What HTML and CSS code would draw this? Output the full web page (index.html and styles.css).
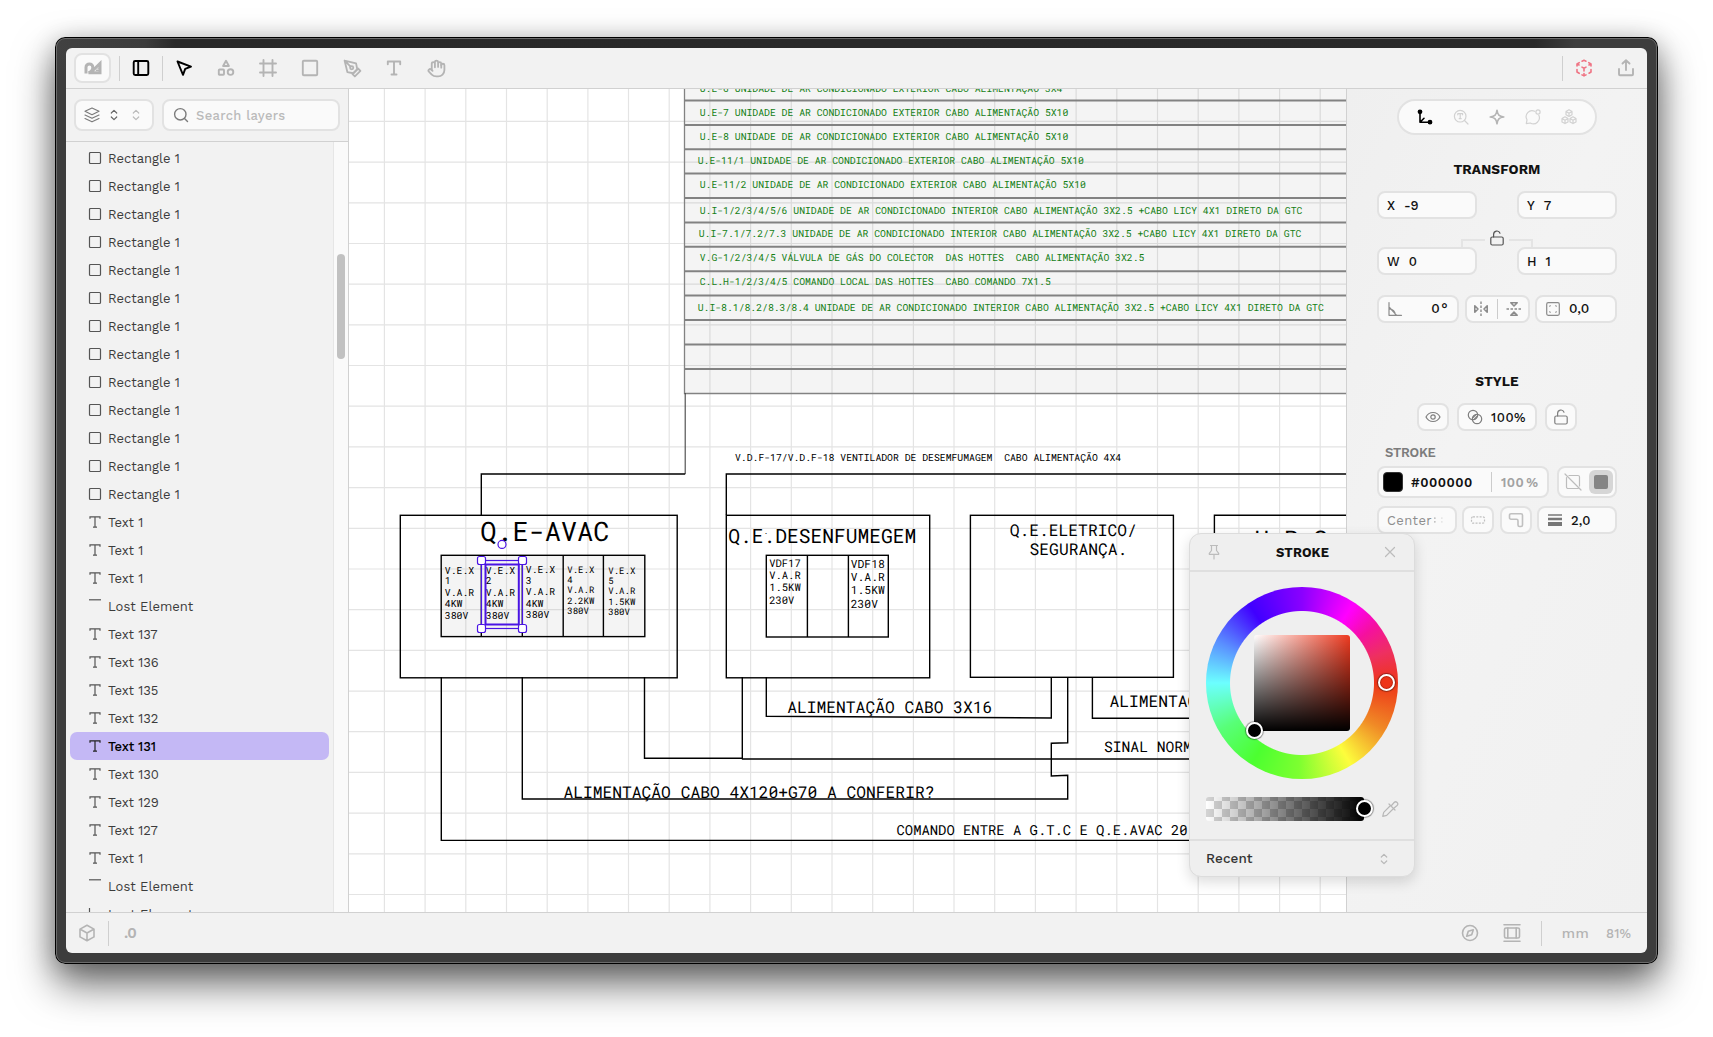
FILE: index.html
```html
<!DOCTYPE html>
<html lang="en">
<head>
<meta charset="utf-8">
<title>Vector editor</title>
<link rel="stylesheet" href="styles.css">
</head>
<body>
<svg class="defs" aria-hidden="true">
  <symbol id="rect" viewBox="0 0 14 14"><rect x="1.5" y="1.5" width="11" height="11" rx="1" /></symbol>
  <symbol id="text" viewBox="0 0 14 14"><path d="M2 3.8V1.9h10v1.9M7 1.9v10.2M5 12.1h4" /></symbol>
  <symbol id="line" viewBox="0 0 14 14"><path d="M1 .8h12" /></symbol>
  <symbol id="vline" viewBox="0 0 14 14"><path d="M1.5 1v12" /></symbol>
  <symbol id="updown" viewBox="0 0 8 12"><path d="M1.3 4 4 1.3 6.7 4M1.3 8 4 10.7 6.7 8" /></symbol>
  <symbol id="unlock" viewBox="0 0 16 18"><rect x="1.8" y="8" width="12.4" height="8" rx="1.5" /><path d="M4.6 8V5.4a3.3 3.3 0 0 1 6.4-1.2" /></symbol>
</svg>
<div class="window">
  <div class="app">
    <header class="toolbar">
      <div class="logo"><svg width="20" height="16" viewBox="0 0 20 16"><path d="M3 13.5V7.300a3.400 3.400 0 0 1 6.800 0c0 2.700-1.500 4.700-4.300 5.400H17V3.500L9.300 11" /><path d="M13 10.500l3-3v3z" class="solid" /></svg></div>
      <i class="sep"></i>
      <span class="tool on"><svg viewBox="0 0 20 20"><rect x="2.7" y="3" width="14.6" height="14" rx="1.5" /><path d="M7.2 3v14" /></svg></span>
      <i class="sep"></i>
      <span class="tool on"><svg viewBox="0 0 20 20"><path d="M3.5 3.5 17 8.6l-5.8 2.2L9 16.8z" /></svg></span>
      <span class="tool"><svg viewBox="0 0 20 20"><path d="M10 2.800 12.900 8H7.100z" /><rect x="2.800" y="11.500" width="5.200" height="5.200" rx=".8" /><circle cx="14.500" cy="14.100" r="2.800" /></svg></span>
      <span class="tool"><svg viewBox="0 0 20 20"><path d="M5.500 2v16M14.500 2v16M2 5.500h16M2 14.500h16" /></svg></span>
      <span class="tool"><svg viewBox="0 0 20 20"><rect x="2.800" y="2.800" width="14.400" height="14.400" rx="1" /></svg></span>
      <span class="tool"><svg viewBox="0 0 24 24" class="pen"><path d="m12 19 7-7 3 3-7 7-3-3z" /><path d="m18 13-1.500-7.500L2 2l3.500 14.500L13 18l5-5zM2 2l7.600 7.600" /><circle cx="11" cy="11" r="2" /></svg></span>
      <span class="tool"><svg viewBox="0 0 20 20"><path d="M3.800 6.200V3.500h12.400v2.700M10 3.500v13M7.500 16.500h5" /></svg></span>
      <span class="tool"><svg viewBox="0 0 24 24" class="pen"><path d="M18 11V6a2 2 0 0 0-4 0M14 10V4a2 2 0 0 0-4 0v2M10 10.500V6a2 2 0 0 0-4 0v8" /><path d="M18 8a2 2 0 1 1 4 0v6a8 8 0 0 1-8 8h-2c-2.800 0-4.500-.86-5.990-2.340l-3.600-3.600a2 2 0 0 1 2.830-2.820L7 15" /></svg></span>
      <span class="grow"></span>
      <i class="sep"></i>
      <span class="tool pink"><svg viewBox="0 0 20 20"><path d="M8 3.200 10 2.200l2 1M14.800 4.700l2.200 1.200v2M17 11.500V14l-2 1.200M12 16.900l-2 1-2-1M5.200 15.300 3 14v-2.500M3 8V5.900l2.200-1.200M10 11v2M10 10.200 8 9.100M10 10.200l2-1.100M3.300 6l1.700 1M16.700 6 15 7M10 15.500V18" /></svg></span>
      <span class="tool"><svg viewBox="0 0 20 20"><path d="M3 11v5.300a1 1 0 0 0 1 1h12a1 1 0 0 0 1-1V11M10 12V2.500M6.500 5.500 10 2.200l3.500 3.300" /></svg></span>
    </header>

    <main class="body">
      <aside class="layers">
        <div class="filters">
          <div class="field kind"><svg width="18" height="18" viewBox="0 0 18 18"><path d="m9 2 7 3.300-7 3.400-7-3.400zM2 9l7 3.300L16 9M2 12.500l7 3.300 7-3.300" /></svg><svg class="chev" width="8" height="12"><use href="#updown" /></svg><svg class="chev dim" width="8" height="12"><use href="#updown" /></svg></div>
          <div class="field search"><svg width="16" height="16" viewBox="0 0 16 16"><circle cx="7.300" cy="7.300" r="5.700" /><path d="m11.500 11.500 3 3" /></svg><span>Search layers</span></div>
        </div>
        <div class="list">
          <ul>
            <li><svg><use href="#rect" /></svg>Rectangle 1</li>
            <li><svg><use href="#rect" /></svg>Rectangle 1</li>
            <li><svg><use href="#rect" /></svg>Rectangle 1</li>
            <li><svg><use href="#rect" /></svg>Rectangle 1</li>
            <li><svg><use href="#rect" /></svg>Rectangle 1</li>
            <li><svg><use href="#rect" /></svg>Rectangle 1</li>
            <li><svg><use href="#rect" /></svg>Rectangle 1</li>
            <li><svg><use href="#rect" /></svg>Rectangle 1</li>
            <li><svg><use href="#rect" /></svg>Rectangle 1</li>
            <li><svg><use href="#rect" /></svg>Rectangle 1</li>
            <li><svg><use href="#rect" /></svg>Rectangle 1</li>
            <li><svg><use href="#rect" /></svg>Rectangle 1</li>
            <li><svg><use href="#rect" /></svg>Rectangle 1</li>
            <li><svg><use href="#text" /></svg>Text 1</li>
            <li><svg><use href="#text" /></svg>Text 1</li>
            <li><svg><use href="#text" /></svg>Text 1</li>
            <li><svg><use href="#line" /></svg>Lost Element</li>
            <li><svg><use href="#text" /></svg>Text 137</li>
            <li><svg><use href="#text" /></svg>Text 136</li>
            <li><svg><use href="#text" /></svg>Text 135</li>
            <li><svg><use href="#text" /></svg>Text 132</li>
            <li class="sel"><svg><use href="#text" /></svg>Text 131</li>
            <li><svg><use href="#text" /></svg>Text 130</li>
            <li><svg><use href="#text" /></svg>Text 129</li>
            <li><svg><use href="#text" /></svg>Text 127</li>
            <li><svg><use href="#text" /></svg>Text 1</li>
            <li><svg><use href="#line" /></svg>Lost Element</li>
            <li><svg><use href="#vline" /></svg>Lost Element</li>
          </ul>
          <div class="track"><div class="thumb"></div></div>
        </div>
      </aside>

      <section class="canvas">
        <svg width="997" height="823" viewBox="349 89 997 823">
          <path class="gridline" d="M384.400 89v823M425.100 89v823M465.800 89v823M506.500 89v823M547.200 89v823M587.900 89v823M628.500 89v823M669.200 89v823M709.900 89v823M750.600 89v823M791.300 89v823M832 89v823M872.700 89v823M913.400 89v823M954 89v823M994.700 89v823M1035.400 89v823M1076.100 89v823M1116.800 89v823M1157.500 89v823M1198.200 89v823M1238.900 89v823M1279.600 89v823M1320.200 89v823" />
          <path class="gridline" d="M349 121.400h997M349 162.100h997M349 202.800h997M349 243.500h997M349 284.200h997M349 324.900h997M349 365.500h997M349 406.200h997M349 446.900h997M349 487.600h997M349 528.300h997M349 569h997M349 609.700h997M349 650.400h997M349 691.100h997M349 731.700h997M349 772.400h997M349 813.100h997M349 853.800h997M349 894.500h997" />

          <g class="table">
            <rect x="684" y="80" width="680" height="313.200" />
            <path d="M684 100.500H1346M684 124.900H1346M684 149.300H1346M684 173.600H1346M684 198H1346M684 222.400H1346M684 246.800H1346M684 271.200H1346M684 295.500H1346M684 320H1346M684 344.400H1346M684 368.900H1346" />
            <path d="M684.500 89V393.500H1346" class="edge" />
          </g>
          <g class="t s green">
            <text x="699.700" y="92">U.E-6 UNIDADE DE AR CONDICIONADO EXTERIOR CABO ALIMENTAÇÃO 3X4</text>
            <text x="699.700" y="116">U.E-7 UNIDADE DE AR CONDICIONADO EXTERIOR CABO ALIMENTAÇÃO 5X10</text>
            <text x="699.700" y="140">U.E-8 UNIDADE DE AR CONDICIONADO EXTERIOR CABO ALIMENTAÇÃO 5X10</text>
            <text x="697.700" y="164">U.E-11/1 UNIDADE DE AR CONDICIONADO EXTERIOR CABO ALIMENTAÇÃO 5X10</text>
            <text x="699.700" y="188">U.E-11/2 UNIDADE DE AR CONDICIONADO EXTERIOR CABO ALIMENTAÇÃO 5X10</text>
            <text x="699.700" y="214">U.I-1/2/3/4/5/6 UNIDADE DE AR CONDICIONADO INTERIOR CABO ALIMENTAÇÃO 3X2.5 +CABO LICY 4X1 DIRETO DA GTC</text>
            <text x="698.700" y="237">U.I-7.1/7.2/7.3 UNIDADE DE AR CONDICIONADO INTERIOR CABO ALIMENTAÇÃO 3X2.5 +CABO LICY 4X1 DIRETO DA GTC</text>
            <text x="699.700" y="261">V.G-1/2/3/4/5 VÁLVULA DE GÁS DO COLECTOR&#160; DAS HOTTES&#160; CABO ALIMENTAÇÃO 3X2.5</text>
            <text x="699.700" y="285">C.L.H-1/2/3/4/5 COMANDO LOCAL DAS HOTTES&#160; CABO COMANDO 7X1.5</text>
            <text x="697.700" y="311">U.I-8.1/8.2/8.3/8.4 UNIDADE DE AR CONDICIONADO INTERIOR CABO ALIMENTAÇÃO 3X2.5 +CABO LICY 4X1 DIRETO DA GTC</text>
          </g>

          <rect x="441" y="555.300" width="204" height="81.300" class="shade" />
          <g class="wire">
            <path d="M685.200 393V474" class="thin" />
            <path d="M685.200 474H481.300V515.300" />
            <rect x="400.300" y="515.300" width="276.900" height="162.500" />
            <rect x="441.200" y="555.300" width="203.600" height="81.300" />
            <path d="M481.300 555V637M522.300 555V637M563.200 555V637M603.400 555V637" />
            <path d="M1346 474H726.300V515" />
            <rect x="726.300" y="515.300" width="203.400" height="162.500" />
            <rect x="766.300" y="555.300" width="122" height="81.700" />
            <path d="M807.400 555V637M848.400 555V637" />
            <rect x="970.400" y="515.300" width="203" height="162" />
            <path d="M1346 515.300H1214.400V677" />
            <path d="M441.300 677V840.400H1346M522.300 677V799H1067.700V775.200L1051.300 776V743.300L1067.700 742.800V677M644.500 677V758.300H742L742.500 759H1346M742.300 677V759M766.300 677V716.300L1051.300 718V677M1092.400 677V718.300H1346" />
          </g>
          <g class="t">
            <text x="735" y="461" class="s">V.D.F-17/V.D.F-18 VENTILADOR DE DESEMFUMAGEM&#160; CABO ALIMENTAÇÃO 4X4</text>
            <text x="480.300" y="540.700" font-size="26.900">Q.E-AVAC</text>
            <text x="728.300" y="543" font-size="19.570">Q.E.DESENFUMEGEM</text>
            <text x="763.500" y="534" font-size="8">.</text>
            <g font-size="16.270">
              <text x="1009.800" y="536">Q.E.ELETRICO/</text>
              <text x="1029.600" y="555">SEGURANÇA.</text>
              <text x="787.300" y="712.700">ALIMENTAÇÃO CABO 3X16</text>
              <text x="1109.500" y="707">ALIMENTAÇÃO</text>
              <text x="563.500" y="797.700">ALIMENTAÇÃO CABO 4X120+G70 A CONFERIR?</text>
            </g>
            <text x="1254.500" y="548" font-size="24.400">U.P.S</text>
            <text x="1104" y="752" font-size="14.650">SINAL NORMAL</text>
            <text x="896.500" y="835" font-size="13.860">COMANDO ENTRE A G.T.C E Q.E.AVAC 20</text>
            <g font-size="9.800">
              <text y="573.700"><tspan x="444.800">V.E.X</tspan><tspan x="444.800" y="584.300">1</tspan><tspan x="444.800" y="595.700">V.A.R</tspan><tspan x="444.800" y="607.300">4KW</tspan><tspan x="444.800" y="618.700">380V</tspan></text>
              <text y="573.700"><tspan x="485.800">V.E.X</tspan><tspan x="485.800" y="584.300">2</tspan><tspan x="485.800" y="595.700">V.A.R</tspan><tspan x="485.800" y="607.300">4KW</tspan><tspan x="485.800" y="618.700">380V</tspan></text>
              <text y="572.700"><tspan x="525.800">V.E.X</tspan><tspan x="525.800" y="583.700">3</tspan><tspan x="525.800" y="594.700">V.A.R</tspan><tspan x="525.800" y="606.700">4KW</tspan><tspan x="525.800" y="618">380V</tspan></text>
            </g>
            <g font-size="9">
              <text y="572.700"><tspan x="567.300">V.E.X</tspan><tspan x="567.300" y="583">4</tspan><tspan x="567.300" y="593">V.A.R</tspan><tspan x="567.300" y="604">2.2KW</tspan><tspan x="567.300" y="614">380V</tspan></text>
              <text y="573.700"><tspan x="608.300">V.E.X</tspan><tspan x="608.300" y="584">5</tspan><tspan x="608.300" y="594">V.A.R</tspan><tspan x="608.300" y="605">1.5KW</tspan><tspan x="608.300" y="615">380V</tspan></text>
            </g>
            <text font-size="10.500" y="567"><tspan x="769.200">VDF17</tspan><tspan x="769.200" y="579">V.A.R</tspan><tspan x="769.200" y="591">1.5KW</tspan><tspan x="769.200" y="604">230V</tspan></text>
            <text font-size="11.300" y="568"><tspan x="850.800">VDF18</tspan><tspan x="850.800" y="581">V.A.R</tspan><tspan x="850.800" y="594">1.5KW</tspan><tspan x="850.800" y="608">230V</tspan></text>
          </g>
          <g class="pick">
            <rect x="481.500" y="560.500" width="41" height="68" />
            <rect x="485.500" y="564.500" width="33.300" height="60" class="bold" />
            <g class="knob">
              <rect x="477.500" y="556.500" width="8" height="8" rx="2" /><rect x="518.500" y="556.500" width="8" height="8" rx="2" />
              <rect x="477.500" y="624.500" width="8" height="8" rx="2" /><rect x="518.500" y="624.500" width="8" height="8" rx="2" />
              <circle cx="502" cy="544.400" r="4" />
            </g>
          </g>
        </svg>
      </section>

      <aside class="panel">
        <nav class="tabs">
          <svg class="cur" viewBox="0 0 18 18"><path d="M4 4v10.300h10M4.300 14 8 10.300" /><circle cx="4" cy="3.800" r="1.600" class="dot" /><circle cx="14" cy="14.200" r="1.600" class="dot" /></svg>
          <svg class="faint" viewBox="0 0 18 18"><circle cx="8.200" cy="8.200" r="5.800" /><path d="m12.500 12.500 3.500 3.500M5.800 6.800V5.700h4.800v1.100M8.200 5.700v5M7.200 10.700h2" /></svg>
          <svg class="mid" viewBox="0 0 18 18"><path d="M9 2.200C9.600 6.900 11.100 8.400 15.800 9 11.100 9.600 9.600 11.100 9 15.800 8.400 11.100 6.900 9.600 2.200 9 6.900 8.400 8.400 6.900 9 2.200z" /></svg>
          <svg class="faint" viewBox="0 0 18 18"><path d="M10.700 3.300A6 6 0 0 0 3 11.800L2.300 15.700l4-.7a6 6 0 0 0 8.500-7.700" /><circle cx="14" cy="4" r="2.100" /></svg>
          <svg class="faint" viewBox="0 0 18 18"><path d="m9 1.700 3 1.700v3.400L9 8.500 6 6.800V3.400zM5 8.800l3 1.700v3.400l-3 1.700-3-1.700v-3.400zM13 8.800l3 1.700v3.400l-3 1.700-3-1.700v-3.400zM6 3.500l3 1.700 3-1.700M9 5.200v3.300M2 10.600l3 1.700 3-1.700M5 12.300v3.300M10 10.600l3 1.700 3-1.700M13 12.300v3.300" /></svg>
        </nav>
        <h2>TRANSFORM</h2>
        <div class="row pair"><div class="field num">X<b>-9</b></div><div class="field num">Y<b>7</b></div></div>
        <div class="link"><i class="l"></i><svg width="16" height="18"><use href="#unlock" /></svg><i class="r"></i></div>
        <div class="row pair"><div class="field num">W<b>0</b></div><div class="field num">H<b>1</b></div></div>
        <div class="row three">
          <div class="field angle"><svg width="16" height="16" viewBox="0 0 16 16"><path d="M2 1.500v12.800h12.500M2.500 8c3.500.300 5.500 2.500 6 6M2.500 6.500l6.500 7" /></svg><b>0°</b></div>
          <div class="field flips">
            <svg width="16" height="16" viewBox="0 0 16 16"><path d="M1.800 4.800v6.400L5 8zM14.200 4.800v6.400L11 8z" class="fat" /><path d="M8 .500v15" class="dash" /></svg><i></i>
            <svg width="16" height="16" viewBox="0 0 16 16"><path d="M4.800 1.800h6.400L8 5zM4.800 14.200h6.400L8 11z" class="fat" /><path d="M.500 8h15" class="dash" /></svg>
          </div>
          <div class="field corner"><svg width="16" height="16" viewBox="0 0 16 16"><rect x="1.700" y="1.700" width="12.600" height="12.600" rx="1.500" /><path d="M4.700 5.500v-.8h.8M10.500 4.700h.8v.8M11.300 10.500v.8h-.8M5.500 11.300h-.8v-.8" stroke-width=".8" /></svg><b>0,0</b></div>
        </div>
        <h2 class="style">STYLE</h2>
        <div class="row mids">
          <div class="field icon"><svg width="16" height="16" viewBox="0 0 16 16"><path d="M1 8c1.500-3 4-4.500 7-4.500S13.500 5 15 8c-1.500 3-4 4.500-7 4.500S2.500 11 1 8z" /><circle cx="8" cy="8" r="2.200" /></svg></div>
          <div class="field op"><svg width="16" height="16" viewBox="0 0 16 16"><circle cx="6" cy="6" r="4.700" /><circle cx="10" cy="10" r="4.700" /><path d="m6 8.500 2.500-2.500M7.500 10 10 7.500" /></svg><b>100%</b></div>
          <div class="field icon"><svg width="16" height="18"><use href="#unlock" /></svg></div>
        </div>
        <h3>STROKE</h3>
        <div class="row color">
          <div class="field hex"><i class="swatch"></i><b>#000000</b><i class="bar"></i><em>100<span>%</span></em></div>
          <div class="field fills"><svg width="18" height="18" viewBox="0 0 18 18"><path d="M5 2.500h9a1.500 1.500 0 0 1 1.500 1.500v9M14 15.500H4A1.500 1.500 0 0 1 2.500 14V4.500M1 1l16 16" /></svg><span><i></i></span></div>
        </div>
        <div class="row color">
          <div class="field center">Center<svg class="colons" width="12" height="8" viewBox="0 0 12 8"><path d="M1 2.200h1.600M1 5.800h1.600" opacity=".7" /><path d="M8 2.200h1.600M8 5.800h1.600" opacity=".25" /></svg></div>
          <div class="field icon lite"><svg width="16" height="16" viewBox="0 0 16 16"><rect x="1.500" y="4.800" width="13" height="6.400" rx="1.500" class="dots" /></svg></div>
          <div class="field icon lite"><svg width="16" height="16" viewBox="0 0 16 16"><path d="M3 1.700h10a1.500 1.500 0 0 1 1.500 1.500V13a1.500 1.500 0 0 1-1.500 1.500h-1.500A1.500 1.500 0 0 1 10 13V8.700a1.500 1.500 0 0 0-1.500-1.500H3a1.500 1.500 0 0 1-1.500-1.500V3.200A1.500 1.500 0 0 1 3 1.700z" class="fat" /></svg></div>
          <div class="field weight"><svg width="16" height="14" viewBox="0 0 16 14"><path d="M1 2h14" stroke-width="1.500" /><path d="M1 6h14" stroke-width="2.500" /><path d="M1 11h14" stroke-width="4" /></svg><b>2,0</b></div>
        </div>
      </aside>
    </main>

    <footer class="status">
      <svg width="18" height="18" viewBox="0 0 18 18"><path d="m9 1.300 7 3.800v7.800l-7 3.800-7-3.800V5.100zM2.300 5.300 9 9l6.700-3.700M9 9v7.500" /></svg>
      <i class="sep"></i>
      <span class="prec">.0</span>
      <span class="grow"></span>
      <svg class="compass" width="18" height="18" viewBox="0 0 18 18"><circle cx="9" cy="9" r="7.500" /><path d="m12.300 5.700-1.600 5-5 1.600 1.600-5z" /></svg>
      <svg class="film" width="18" height="20" viewBox="0 0 18 20"><path d="M1 1.700h16M1 18.300h16" /><rect x="1.500" y="5" width="15" height="10" rx="1.500" /><path d="M4.800 5v10M13.200 5v10" /></svg>
      <i class="sep end"></i>
      <span class="unit">mm</span>
      <span class="zoom">81%</span>
    </footer>
  </div>
</div>

<div class="popup">
  <div class="phead"><svg width="14" height="16" viewBox="0 0 14 16"><path d="M3.500 1.500h7M4.500 1.500v5L2.300 9.300v1h9.400v-1L9.500 6.500v-5M7 10.500V15" /></svg><strong>STROKE</strong><svg width="12" height="12" viewBox="0 0 12 12"><path d="m1.500 1.500 9 9M10.500 1.500l-9 9" /></svg></div>
  <div class="pbody">
    <div class="wheel"><div class="square"></div><i class="grip hue"></i><i class="grip sv"></i></div>
    <div class="alpha"><div class="ramp"><i class="grip end"></i></div><svg width="18" height="18" viewBox="0 0 18 18"><path d="M9.500 5.500 2.700 12.300l-1 4 4-1 6.800-6.800M8 4l6 6M10.500 5.500l2.600-3a2 2 0 0 1 3 3l-3 2.500" /></svg></div>
  </div>
  <div class="pfoot">Recent<svg width="8" height="12"><use href="#updown" /></svg></div>
</div>
</body>
</html>
```
FILE: styles.css
```css
* { box-sizing: border-box; }
body {
  margin: 0;
  width: 1713px;
  height: 1037px;
  overflow: hidden;
  background: #fff;
  font: 500 13px/1 "Work Sans", Inter, "Liberation Sans", sans-serif;
  color: #111;
  position: relative;
  padding: 37px 0 0 55px;
}
svg { fill: none; stroke: currentColor; stroke-width: 1.2; stroke-linecap: round; stroke-linejoin: round; flex: none; display: block; }
.defs { position: absolute; width: 0; height: 0; }
b { font-weight: 500; }
i, em { font-style: normal; }

.window {
  width: 1603px;
  height: 927px;
  padding: 11px;
  border-radius: 10px;
  background: linear-gradient(#0000, #0000 11px, #3d3d3d 40px), linear-gradient(90deg, #414141 0, #3c3c3c 90px, #292929 120px, #2a2a2a 1480px, #3d3d3d 1520px);
  box-shadow: inset 0 0 0 1px #000, inset 0 0 0 2px #6b6b6b, 0 20px 40px rgba(0, 0, 0, .58), 0 4px 24px rgba(0, 0, 0, .22);
}
.app { height: 905px; border-radius: 6px; overflow: hidden; display: flex; flex-direction: column; background: #f2f2f2; }

.toolbar { height: 41px; border-bottom: 1px solid #d1d1d1; display: flex; align-items: center; padding: 0 0 0 8px; }
.logo { width: 37px; height: 30px; border: 2px solid #e2e2e2; border-radius: 8px; background: #fafafa; display: flex; align-items: center; justify-content: center; color: #b4b4b4; }
.logo svg { stroke-width: 3; stroke-linejoin: miter; stroke-linecap: butt; }
.logo .solid { stroke-width: 1; }
.sep { width: 1px; height: 25px; background: #cfcfcf; margin-left: 8px; flex: none; }
.tool { width: 42px; display: flex; justify-content: center; color: #b4b4b4; }
.tool svg { width: 20px; height: 20px; stroke-width: 1.9; }
.tool .pen { stroke-width: 2.3; width: 19px; height: 19px; }
.tool.on { color: #000; margin-right: -8px; }
.tool.on + .tool { margin-left: 8px; }
.sep + .tool.on { margin-left: 0; }
.tool.pink { color: #ef7484; }
.tool.pink svg { stroke-width: 1.6; }
.grow { flex: 1; }

.body { height: 823px; display: flex; }
.layers { width: 283px; border-right: 1px solid #d1d1d1; display: flex; flex-direction: column; }
.filters { height: 53px; border-bottom: 1px solid #d1d1d1; padding: 10px 8px 0; display: flex; gap: 8px; flex: none; }
.field { border: 2px solid #e2e2e2; border-radius: 8px; background: #fafafa; display: flex; align-items: center; flex: none; }
.kind { width: 80px; height: 32px; padding-left: 7px; color: #7c7c7c; }
.kind .chev { margin-left: 9px; color: #666; }
.kind .dim { margin-left: 14px; color: #bbb; }
.search { width: 178px; height: 32px; padding-left: 9px; color: #7c7c7c; }
.search svg { stroke-width: 1.4; }
.search span { margin-left: 7px; color: #bababa; font-size: 13px; letter-spacing: .3px; }
.list { flex: 1; min-height: 0; display: flex; overflow: hidden; }
.list ul { width: 267px; margin: 0; padding: 2px 4px; list-style: none; }
.list li { height: 28px; padding-left: 18px; display: flex; align-items: center; border-radius: 7px; font-size: 13px; font-weight: 400; color: #3c3c3c; gap: 6px; }
.list li svg { width: 14px; height: 14px; stroke-linecap: butt; stroke-linejoin: miter; color: #555; }
.list .sel { background: #c4b8f5; color: #000; width: 259px; font-weight: 500; letter-spacing: -.1px; }
.list .sel svg { color: #222; }
.track { width: 15px; border-left: 1px solid #e6e6e6; background: #fafafa; padding: 112px 2px 0 3px; }
.thumb { width: 8px; height: 105px; border-radius: 4px; background: #c1c1c1; }

.canvas { width: 997px; background: #fff; overflow: hidden; }
.canvas svg { stroke: none; stroke-linecap: butt; stroke-linejoin: miter; }
.gridline { stroke: #e4e4e4; stroke-width: 1.2; fill: none; }
.table rect, .shade { fill: rgba(110, 110, 110, .08); }
.table path { stroke: #828282; stroke-width: 2; fill: none; }
.table .edge { stroke-width: 1.3; }
.wire { fill: none; stroke: #000; stroke-width: 1.4; }
.wire .thin { stroke: #444; stroke-width: 1.1; }
.t { fill: #000; font-family: "Roboto Mono", "DejaVu Sans Mono", monospace; font-weight: 400; text-rendering: geometricPrecision; }
.s { font-size: 9.760px; }
.green { fill: #148014; }
.pick { fill: none; stroke: #4a14e4; stroke-width: 1.2; }
.pick .bold { stroke-width: 2; }
.knob { fill: #fff; }

.panel { width: 301px; border-left: 1px solid #d1d1d1; padding: 10px 30px 0; background: linear-gradient(115deg, #efefef, #f3f3f3 40%, #f0f0f0); }
.tabs { width: 200px; height: 36px; margin: 0 auto; border: 2px solid #e2e2e2; border-radius: 18px; background: #fafafa; display: flex; align-items: center; justify-content: center; gap: 18px; }
.tabs svg { width: 18px; height: 18px; }
.cur { color: #000; stroke-width: 1.6; }
.dot { fill: #000; }
.tabs .faint { color: #d2d2d2; }
.tabs .mid { color: #b4b4b4; stroke-width: 1.6; }
.panel h2 { margin: 28px 0 15px; height: 13px; text-align: center; font-size: 13.600px; line-height: 12px; font-weight: 700; letter-spacing: .1px; }
.row { display: flex; }
.pair { justify-content: space-between; }
.num { width: 100px; height: 28px; padding-left: 8px; font-size: 13px; }
.num b { margin-left: 9px; }
.link { height: 28px; display: flex; justify-content: center; gap: 4px; padding-top: 10px; color: #555; }
.link i { width: 24px; height: 8px; margin-top: 10px; border-top: 2px solid #e4e4e4; }
.link .l { border-left: 2px solid #e4e4e4; }
.link .r { border-right: 2px solid #e4e4e4; }
.three { margin-top: 20px; justify-content: space-between; color: #8b8b8b; }
.three .field { height: 28px; }
.three b { color: #111; font-size: 13.500px; }
.three .angle { width: 82px; padding: 0 8px; justify-content: space-between; }
.angle b { letter-spacing: 1.500px; }
.three .flips { width: 65px; justify-content: space-between; padding: 0 6px; }
.flips i { width: 1px; height: 20px; background: #ccc; }
.fat { stroke-width: 1.6; }
.dash { stroke-dasharray: 2.500 1.500; stroke-linecap: butt; stroke-width: 1.4; }
.dots { stroke-dasharray: 2 1.300; stroke-linecap: butt; }
.three .corner { width: 82px; padding-left: 8px; gap: 8px; }
.panel .style { margin: 52px 0 15px; }
.mids { justify-content: center; gap: 8px; color: #7f7f7f; }
.icon { width: 32px; height: 28px; justify-content: center; color: #7f7f7f; }
.op { width: 80px; height: 28px; padding-left: 8px; gap: 8px; }
.op b { color: #111; letter-spacing: .500px; }
.panel h3 { margin: 16px 0 7px 8px; height: 12px; line-height: 11px; font-size: 13px; font-weight: 600; color: #7c7c7c; letter-spacing: -.2px; }
.color { justify-content: space-between; margin-bottom: 8px; }
.hex { width: 172px; height: 32px; padding: 0 8px 0 4px; }
.swatch { width: 20px; height: 20px; border-radius: 4px; background: #000; border: 1px solid #333; }
.hex b { margin-left: 8px; font-weight: 600; width: 80px; letter-spacing: .500px; }
.bar { width: 1px; height: 20px; background: #ccc; }
.hex em { margin-left: 9px; color: #a2a2a2; font-weight: 600; letter-spacing: .4px; white-space: nowrap; display: flex; gap: 2px; }
.fills { width: 60px; height: 32px; padding: 0 2px 0 5px; justify-content: space-between; color: #bdbdbd; }
.fills span { width: 24px; height: 24px; border-radius: 6px; background: #d6d6d6; padding: 5px; }
.fills span i { display: block; width: 14px; height: 14px; background: #858585; border-radius: 2px; }
.center { width: 80px; height: 28px; padding-left: 8px; color: #8e8e8e; letter-spacing: .4px; font-weight: 400; }
.colons { stroke-linecap: butt; margin-left: 1px; }
.lite { color: #c0c0c0; }
.weight { width: 80px; height: 28px; padding-left: 8px; gap: 8px; color: #777; }
.weight svg { stroke-linecap: butt; }
.weight b { color: #111; letter-spacing: .2px; }

.status { height: 41px; border-top: 1px solid #d1d1d1; display: flex; align-items: center; color: #b4b4b4; padding: 0 16px 0 12px; }
.status svg { stroke-width: 1.6; }
.status .sep { margin-left: 12px; }
.prec { margin-left: 15px; font-size: 15px; font-weight: 600; letter-spacing: -.8px; }
.film { margin-left: 24px; }
.status .end { margin-left: 20px; }
.unit { margin-left: 20px; font-size: 14px; letter-spacing: .3px; }
.zoom { margin-left: 17px; font-size: 13px; letter-spacing: .1px; }

.popup { position: absolute; left: 1189px; top: 533px; width: 226px; height: 344px; border: 1px solid #dcdcdc; border-radius: 12px; background: #efefef; box-shadow: 0 5px 14px rgba(0, 0, 0, .14); overflow: hidden; color: #222; }
.phead { height: 38px; border-bottom: 2px solid #dfdfdf; display: flex; align-items: center; justify-content: space-between; padding: 0 18px 0 17px; color: #bcbcbc; }
.phead strong { color: #111; font-size: 13px; font-weight: 700; letter-spacing: .1px; }
.pbody { height: 269px; padding: 15px 0 0 16px; border-bottom: 2px solid #dfdfdf; }
.wheel {
  width: 192px; height: 192px; border-radius: 50%; position: relative; padding: 48px;
  background: radial-gradient(circle, #efefef 71.500px, #efefef00 72.500px), conic-gradient(#8a00ff, #ff00ff 33deg, #f5109f 52deg, #ee3060 70deg, #ed3518 90deg, #f08a26 120deg, #fdfd3c 149deg, #7dff30 182deg, #4cff30 212deg, #58ff78 240deg, #6cffff 270deg, #5a90ff 296deg, #4000ff 326deg, #8a00ff);
}
.square { width: 96px; height: 96px; border-radius: 3px; background: linear-gradient(#0000, #000), linear-gradient(90deg, #fff, #ee3a20); }
.grip { position: absolute; width: 17px; height: 17px; border: 2.500px solid #fff; border-radius: 50%; box-shadow: 0 0 1px 1px rgba(0, 0, 0, .4), inset 0 0 1px 1px rgba(0, 0, 0, .25); }
.hue { left: 172px; top: 87px; background: #ee3418; }
.sv { left: 40px; top: 135px; background: #000; }
.alpha { display: flex; align-items: center; gap: 17px; margin-top: 18px; }
.ramp { width: 158px; height: 24px; border-radius: 3px; position: relative; background: linear-gradient(90deg, #0000, #000), repeating-conic-gradient(#d4d4d4 0 25%, #fff 0 50%) 0 4px / 16px 16px; }
.end.grip { right: -9px; top: 3px; background: #000; }
.alpha svg { color: #b8b8b8; }
.pfoot { height: 35px; display: flex; align-items: center; justify-content: space-between; padding: 0 26px 0 16px; font-size: 13.500px; letter-spacing: .1px; color: #333; }
.pfoot svg { color: #b8b8b8; }
```
